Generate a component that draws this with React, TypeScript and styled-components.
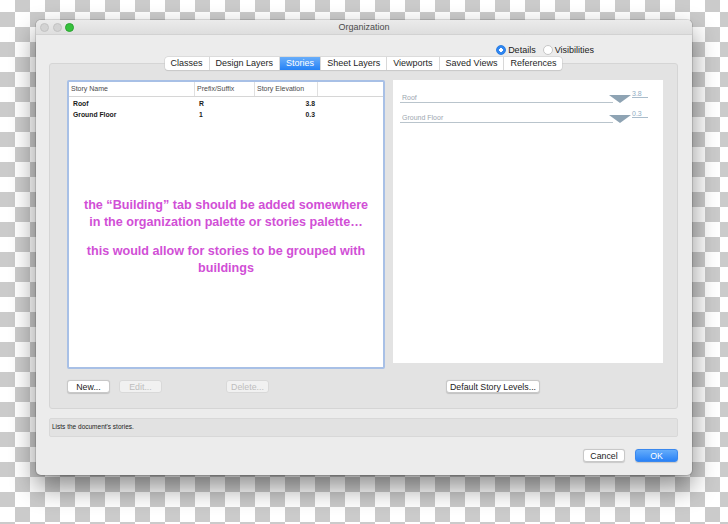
import * as React from 'react';
import styled, { createGlobalStyle } from 'styled-components';

const GlobalStyle = createGlobalStyle`
  html, body {
    margin: 0;
    padding: 0;
  }
  body {
    font-family: "Liberation Sans", Arial, sans-serif;
    -webkit-font-smoothing: antialiased;
  }
`;

const TABS = ['Classes', 'Design Layers', 'Stories', 'Sheet Layers', 'Viewports', 'Saved Views', 'References'];

const STORIES = [
  { name: 'Roof', prefix: 'R', elevation: '3.8' },
  { name: 'Ground Floor', prefix: '1', elevation: '0.3' },
];

export default function App() {
  return (
    <Desktop>
      <GlobalStyle />
      <Window>
        <TitleBar>
          <Lights>
            <Light />
            <Light />
            <Light $color="#36c13d" $edge="#2aa530" />
          </Lights>
          <Title>Organization</Title>
          <span />
        </TitleBar>

        <Body>
          <RadioRow>
            <RadioOption>
              <Radio $checked />
              Details
            </RadioOption>
            <RadioOption>
              <Radio />
              Visibilities
            </RadioOption>
          </RadioRow>

          <TabStrip>
            {TABS.map((t) => (
              <Tab key={t} $active={t === 'Stories'}>{t}</Tab>
            ))}
          </TabStrip>

          <TabBox>
            <Panels>
              <ListPanel>
                <ListHeader>
                  <HeadCell>Story Name</HeadCell>
                  <HeadCell>Prefix/Suffix</HeadCell>
                  <HeadCell>Story Elevation</HeadCell>
                  <HeadCell $last />
                </ListHeader>
                {STORIES.map((s) => (
                  <ListRow key={s.name}>
                    <Cell>{s.name}</Cell>
                    <Cell>{s.prefix}</Cell>
                    <Cell $right>{s.elevation}</Cell>
                    <Cell />
                  </ListRow>
                ))}
                <Note>
                  <p>the “Building” tab should be added somewhere<br />in the organization palette or stories palette…</p>
                  <p>this would allow for stories to be grouped with<br />buildings</p>
                </Note>
              </ListPanel>

              <LevelsPanel>
                {STORIES.map((s) => (
                  <Level key={s.name}>
                    <LevelLine>{s.name}</LevelLine>
                    <Marker width="22" height="8" viewBox="0 0 22 8">
                      <polygon points="0,0 22,0 11,8" fill="#8ea3b3" />
                    </Marker>
                    <LevelValue>{s.elevation}</LevelValue>
                  </Level>
                ))}
              </LevelsPanel>
            </Panels>

            <ButtonRow>
              <Button $w={43}>New...</Button>
              <Button $w={43} $gap={9} disabled>Edit...</Button>
              <Button $w={43} $gap={64} disabled>Delete...</Button>
              <Button $w={94} $gap={177}>Default Story Levels...</Button>
            </ButtonRow>
          </TabBox>

          <Description>Lists the document's stories.</Description>

          <Footer>
            <Button $w={42}>Cancel</Button>
            <Button $w={43} $gap={10} $primary>OK</Button>
          </Footer>
        </Body>
      </Window>
    </Desktop>
  );
}

const Desktop = styled.div`
  width: 728px;
  height: 524px;
  overflow: hidden;
  box-sizing: border-box;
  padding: 20px 0 0 36px;
  background: repeating-conic-gradient(#cbcbcb 0 25%, #ffffff 0 50%) 0 -3px / 30px 30px;
`;

const Window = styled.div`
  width: 656px;
  height: 455px;
  display: flex;
  flex-direction: column;
  background: #ececec;
  border-radius: 5px;
  overflow: hidden;
  box-shadow: 0 12px 26px rgba(0, 0, 0, 0.45), 0 0 0 1px rgba(0, 0, 0, 0.12);
`;

const TitleBar = styled.div`
  height: 14px;
  flex: none;
  display: grid;
  grid-template-columns: 1fr auto 1fr;
  align-items: center;
  padding: 0 4px;
  background: linear-gradient(#ebebeb, #dedede);
  border-bottom: 1px solid #d2d2d2;
`;

const Lights = styled.div`
  display: flex;
  gap: 3.5px;
`;

const Light = styled.span<{ $color?: string; $edge?: string }>`
  width: 9px;
  height: 9px;
  border-radius: 50%;
  box-sizing: border-box;
  background: ${(p) => p.$color ?? '#d3d3d3'};
  border: 0.5px solid ${(p) => p.$edge ?? '#c2c2c2'};
`;

const Title = styled.div`
  font-size: 9px;
  color: #4b4b4b;
`;

const Body = styled.div`
  display: flex;
  flex-direction: column;
  padding: 0 14px 0 13px;
`;

const RadioRow = styled.div`
  display: flex;
  justify-content: flex-end;
  gap: 7px;
  height: 10px;
  margin-top: 10px;
  padding-right: 84px;
`;

const RadioOption = styled.label`
  display: flex;
  align-items: center;
  gap: 2px;
  font-size: 9px;
  color: #222;
`;

const Radio = styled.span<{ $checked?: boolean }>`
  width: 10px;
  height: 10px;
  border-radius: 50%;
  box-sizing: border-box;
  background: ${(p) => (p.$checked ? 'radial-gradient(circle, #fff 0 1.6px, #2f86f2 2px)' : '#fff')};
  border: 1px solid ${(p) => (p.$checked ? '#2a7de0' : '#c6c6c6')};
`;

const TabStrip = styled.div`
  align-self: center;
  display: flex;
  height: 13px;
  margin: 2px 0 -7px;
  position: relative;
  z-index: 1;
  background: #fff;
  border-radius: 3px;
  box-shadow: 0 0 0 0.5px #c9c9c9, 0 1px 1px rgba(0, 0, 0, 0.12);
`;

const Tab = styled.div<{ $active?: boolean }>`
  padding: 0 6px;
  font-size: 9px;
  line-height: 13px;
  color: ${(p) => (p.$active ? '#fff' : '#1e1e1e')};
  background: ${(p) => (p.$active ? 'linear-gradient(#69aefa, #2481f6)' : 'transparent')};
  border-left: 1px solid #d8d8d8;

  &:first-child {
    border-left: none;
  }
`;

const TabBox = styled.div`
  height: 346px;
  box-sizing: border-box;
  display: flex;
  flex-direction: column;
  padding: 16px 14px 0 17px;
  background: #e3e3e3;
  border: 1px solid #d5d5d5;
  border-radius: 3px;
`;

const Panels = styled.div`
  display: flex;
  align-items: flex-start;
  gap: 8px;
`;

const ListPanel = styled.div`
  width: 318px;
  height: 289px;
  box-sizing: border-box;
  background: #fff;
  border: 2px solid #a8c0e6;
  border-radius: 2px;
`;

const ListHeader = styled.div`
  display: grid;
  grid-template-columns: 126px 60px 63px 1fr;
  height: 14px;
  border-bottom: 1px solid #d6d6d6;
`;

const HeadCell = styled.div<{ $last?: boolean }>`
  font-size: 7px;
  line-height: 14px;
  color: #4a4a4a;
  padding-left: 2px;
  border-right: ${(p) => (p.$last ? 'none' : '1px solid #e0e0e0')};
`;

const ListRow = styled.div`
  display: grid;
  grid-template-columns: 126px 60px 63px 1fr;
  height: 11px;

  &:nth-of-type(2) {
    margin-top: 1px;
  }
`;

const Cell = styled.div<{ $right?: boolean }>`
  font-size: 6.8px;
  font-weight: 700;
  line-height: 11px;
  color: #1a1a1a;
  padding: 0 ${(p) => (p.$right ? '3px' : '0')} 0 ${(p) => (p.$right ? '0' : '4px')};
  text-align: ${(p) => (p.$right ? 'right' : 'left')};
`;

const Note = styled.div`
  margin-top: 77px;
  text-align: center;
  font-size: 12.6px;
  font-weight: 700;
  line-height: 16.5px;
  color: #d14fd6;

  p {
    margin: 0 0 13px;
  }
`;

const LevelsPanel = styled.div`
  width: 270px;
  height: 283px;
  box-sizing: border-box;
  padding-top: 10px;
  background: #fff;
`;

const Level = styled.div`
  display: flex;
  align-items: flex-start;
  height: 20px;
  padding-left: 7px;
`;

const LevelLine = styled.div`
  width: 213px;
  height: 13px;
  box-sizing: border-box;
  display: flex;
  align-items: flex-end;
  padding: 0 0 1px 2px;
  font-size: 7px;
  color: #9ca7af;
  border-bottom: 1px solid #b9c4cc;
`;

const Marker = styled.svg`
  margin: 5px 0 0 -4px;
  flex: none;
`;

const LevelValue = styled.div`
  width: 16px;
  margin-left: 1px;
  font-size: 7px;
  line-height: 7px;
  color: #90adc4;
  border-bottom: 1px solid #a9bccb;
`;

const ButtonRow = styled.div`
  display: flex;
  margin-top: 11px;
`;

const Button = styled.button<{ $w: number; $gap?: number; $primary?: boolean }>`
  width: ${(p) => p.$w}px;
  height: 13px;
  margin: 0 0 0 ${(p) => p.$gap ?? 0}px;
  padding: 0;
  font-family: inherit;
  font-size: 8.8px;
  line-height: 12px;
  border-radius: 3px;
  color: ${(p) => (p.$primary ? '#fff' : '#1c1c1c')};
  background: ${(p) => (p.$primary ? 'linear-gradient(#64acfb, #2a82f6)' : '#fff')};
  border: 0.5px solid ${(p) => (p.$primary ? '#3a88ee' : '#c8c8c8')};
  box-shadow: 0 0.5px 1px rgba(0, 0, 0, 0.15);

  &:disabled {
    color: #bdbdbd;
    background: #f1f1f1;
    border-color: #d9d9d9;
    box-shadow: none;
  }
`;

const Description = styled.div`
  height: 19px;
  box-sizing: border-box;
  margin-top: 9px;
  padding: 4px 0 0 2px;
  font-size: 6.5px;
  color: #222;
  background: #e2e2e2;
  border: 1px solid #d8d8d8;
  border-radius: 2px;
`;

const Footer = styled.div`
  display: flex;
  justify-content: flex-end;
  margin-top: 12px;
`;
